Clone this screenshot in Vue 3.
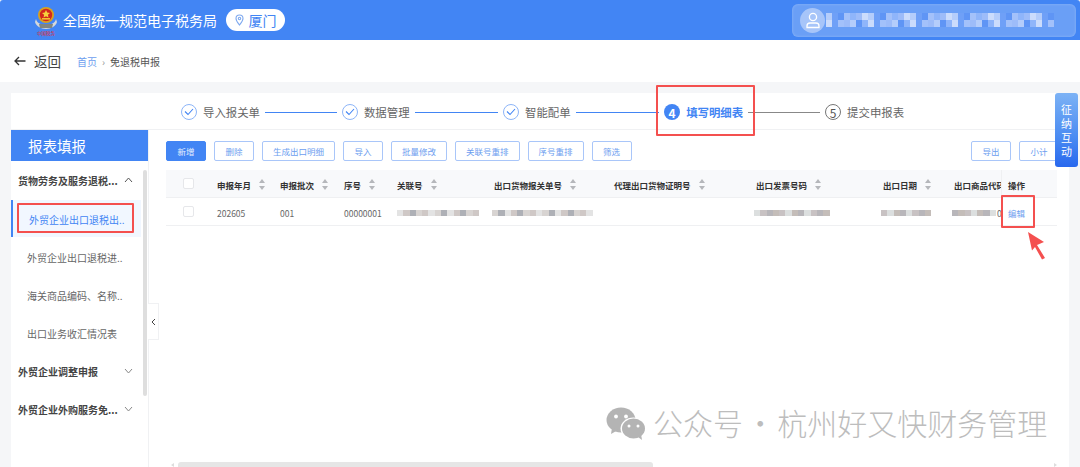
<template>
  <div class="page">
    <header class="topbar">
      <div class="brand">
        <div class="emblem">
          <svg width="24" height="25" viewBox="0 0 24 25">
            <path d="M2 13c1 4 5 6 10 6s9-2 10-6l1 3c-1 4-6 7-11 7S2 20 1 16z" fill="#d5d8da" />
            <path d="M5 18h14l-1 4H6z" fill="#7f8582" />
            <circle cx="12" cy="9" r="8" fill="#d8a21f" />
            <circle cx="12" cy="9" r="6.200" fill="#d3271d" />
            <path d="M12 4l1.200 2.600 2.800.3-2.100 1.900.6 2.800-2.500-1.400-2.500 1.400.6-2.800L8 6.900l2.800-.3z" fill="#f5d33c" />
            <rect x="8" y="12" width="8" height="1.600" fill="#f2c230" />
          </svg>
          <span class="emblem-text">中国税务</span>
        </div>
        <span class="brand-name">全国统一规范电子税务局</span>
        <span class="city">
          <svg width="9" height="12" viewBox="0 0 9 12" fill="none" stroke="#7fa9ef" stroke-width="1.100">
            <path d="M4.500 11C3 9 1 6.800 1 4.500a3.500 3.500 0 0 1 7 0C8 6.800 6 9 4.500 11z" />
            <circle cx="4.500" cy="4.500" r="1.200" />
          </svg>
          厦门
        </span>
      </div>
      <div class="user">
        <span class="avatar">
          <svg width="16" height="17" viewBox="0 0 16 17" fill="none" stroke="#fff" stroke-width="1.300">
            <circle cx="8" cy="5" r="3.600" />
            <path d="M2 15.500v-1.500c0-2 1.500-3 3-3h6c1.500 0 3 1 3 3v1.500z" />
          </svg>
        </span>
        <div class="user-mosaic">
          <div v-for="(row, r) in userRows" :key="r" class="mosaic-row">
            <i v-for="(c, i) in row" :key="i" :style="{ background: c }"></i>
          </div>
        </div>
      </div>
    </header>

    <div class="crumbbar">
      <svg class="back-icon" width="12" height="10" viewBox="0 0 12 10" fill="none" stroke="#333" stroke-width="1.300">
        <path d="M11.500 5H1M5 1L1 5l4 4" />
      </svg>
      <span class="back">返回</span>
      <span class="crumb-home">首页</span>
      <span class="crumb-sep">›</span>
      <span class="crumb-now">免退税申报</span>
    </div>

    <main class="card">
      <div class="steps">
        <template v-for="s in steps" :key="s.name">
          <span v-if="s.state === 'done'" class="step-icon done">
            <svg width="10" height="8" viewBox="0 0 10 8" fill="none" stroke="#4285f4" stroke-width="1.100">
              <path d="M1 3.500L4 6.500 9 1" />
            </svg>
          </span>
          <span v-else class="step-icon" :class="s.state">{{ s.num }}</span>
          <span class="step-name" :class="s.state">{{ s.name }}</span>
          <span v-if="s.line" class="step-line" :class="[s.line, s.state === 'done' ? 'blue' : 'grey']"></span>
        </template>
      </div>

      <div class="body">
        <aside class="side">
          <div class="side-title">报表填报</div>
          <div class="side-list">
            <div class="group first">
              <span>货物劳务及服务退税...</span>
              <svg width="9" height="6" viewBox="0 0 9 6" fill="none" stroke="#555" stroke-width="1"><path d="M1 5l3.500-4L8 5" /></svg>
            </div>
            <div class="item active">外贸企业出口退税出..</div>
            <div class="item">外贸企业出口退税进..</div>
            <div class="item">海关商品编码、名称..</div>
            <div class="item">出口业务收汇情况表</div>
            <div class="group">
              <span>外贸企业调整申报</span>
              <svg width="9" height="6" viewBox="0 0 9 6" fill="none" stroke="#888" stroke-width="1"><path d="M1 1l3.500 4L8 1" /></svg>
            </div>
            <div class="group">
              <span>外贸企业外购服务免...</span>
              <svg width="9" height="6" viewBox="0 0 9 6" fill="none" stroke="#888" stroke-width="1"><path d="M1 1l3.500 4L8 1" /></svg>
            </div>
          </div>
          <div class="side-scroll"></div>
          <div class="collapse">
            <svg width="5" height="8" viewBox="0 0 5 8" fill="none" stroke="#444" stroke-width="1"><path d="M4 1L1 4l3 3" /></svg>
          </div>
        </aside>

        <section class="content">
          <div class="toolbar">
            <button v-for="b in leftButtons" :key="b" class="btn" :class="{ primary: b === '新增' }">{{ b }}</button>
            <span class="spacer"></span>
            <button class="btn">导出</button>
            <button class="btn">小计</button>
          </div>

          <div class="table">
            <div class="tr th">
              <div class="cell"><span class="checkbox"></span></div>
              <div v-for="h in headers" :key="h" class="cell">
                <span class="th-text">{{ h }}</span>
                <span class="sort"><b class="up"></b><b class="down"></b></span>
              </div>
              <div class="cell clipped"><span class="th-text">出口商品代码</span></div>
              <div class="cell op">操作</div>
            </div>
            <div class="tr td">
              <div class="cell"><span class="checkbox"></span></div>
              <div class="cell">202605</div>
              <div class="cell">001</div>
              <div class="cell">00000001</div>
              <div v-for="(m, k) in rowMosaics" :key="k" class="cell">
                <div v-if="m.length" class="mosaic" :class="{ flush: k === 0 }">
                  <i v-for="(c, i) in m" :key="i" :style="{ background: c }"></i>
                </div>
                <span v-if="k === rowMosaics.length - 1" class="tail">0</span>
              </div>
              <div class="cell op"><a class="edit">编辑</a></div>
            </div>
          </div>

          <div class="hscroll">
            <span class="tri left"></span>
            <div class="hthumb"></div>
            <span class="tri right"></span>
          </div>
        </section>
      </div>

      <div class="fab">征<br />纳<br />互<br />动</div>
    </main>

    <!-- 截图上的红框和水印 -->
    <div class="mark mark-step"></div>
    <div class="mark mark-side"></div>
    <div class="mark mark-edit"></div>
    <svg class="arrow" width="20" height="30" viewBox="0 0 20 30">
      <path d="M1 1L17 11l-7 3 8 13-3 1.500L8 16l-3 3.500z" fill="#f4504f" />
    </svg>
    <div class="watermark">
      <svg width="40" height="34" viewBox="0 0 40 34">
        <ellipse cx="15" cy="13" rx="14.500" ry="12.500" fill="#b4b4b4" />
        <path d="M6 21l-1 6 7-4z" fill="#b4b4b4" />
        <circle cx="10" cy="9.500" r="1.900" fill="#fff" />
        <circle cx="20" cy="9.500" r="1.900" fill="#fff" />
        <ellipse cx="27.500" cy="21.500" rx="13" ry="11" fill="#fff" />
        <ellipse cx="27.500" cy="21.500" rx="11.500" ry="10" fill="#b4b4b4" />
        <path d="M32 30l4 3-1-6z" fill="#b4b4b4" />
        <circle cx="23" cy="19" r="1.500" fill="#fff" />
        <circle cx="32" cy="19" r="1.500" fill="#fff" />
      </svg>
      <span>公众号 · 杭州好又快财务管理</span>
    </div>
  </div>
</template>

<script setup>
const steps = [
  { name: '导入报关单', state: 'done', line: 'l1' },
  { name: '数据管理', state: 'done', line: 'l2' },
  { name: '智能配单', state: 'done', line: 'l2' },
  { name: '填写明细表', state: 'current', num: 4, line: 'l3' },
  { name: '提交申报表', state: 'todo', num: 5 },
];

const leftButtons = ['新增', '删除', '生成出口明细', '导入', '批量修改', '关联号重排', '序号重排', '筛选'];

const headers = ['申报年月', '申报批次', '序号', '关联号', '出口货物报关单号', '代理出口货物证明号', '出口发票号码', '出口日期'];

// 打码区域的色块
const g = ['#e3e3e3', '#c8c2c3', '#d8d4d2', '#b8b6ba', '#cfc8c6', '#dcdfdf', '#aeb0b6', '#c4bdb9'];
const pick = (n, s) => Array.from({ length: n }, (_, i) => g[(i * 3 + s + (i % 2)) % g.length]);

const rowMosaics = [
  pick(13, 0),
  pick(16, 2),
  [],
  pick(12, 5),
  pick(8, 1),
  pick(7, 3),
];

const b = ['#6fa0f7', '#8fb5fa', '#b4cdfb', '#a3c1fa', '#cbdcfc', '#5f95f5', '#9dbcf9'];
const userRows = [
  Array.from({ length: 38 }, (_, i) => b[(i * 5 + 2) % b.length]),
  Array.from({ length: 38 }, (_, i) => b[(i * 3 + 4) % b.length]),
];
</script>

<style>
html, body {
  margin: 0;
  background: #fff;
}
</style>

<style scoped>
.page {
  position: relative;
  width: 1080px;
  height: 467px;
  overflow: hidden;
  display: flex;
  flex-direction: column;
  background: #f5f6f8;
  font-family: "Noto Sans CJK SC", "Noto Sans", sans-serif;
  color: #555;
}

/* 顶栏 */
.topbar {
  height: 40px;
  flex: none;
  display: flex;
  align-items: center;
  justify-content: space-between;
  padding: 0 4px 0 34px;
  box-sizing: border-box;
  background: #4285f4;
  border-radius: 3px 3px 0 0;
}
.brand {
  display: flex;
  align-items: center;
}
.emblem {
  width: 24px;
  height: 32px;
  display: flex;
  flex-direction: column;
  align-items: center;
  margin-top: 4px;
}
.emblem-text {
  font-size: 4.500px;
  line-height: 5px;
  color: #e2231a;
  white-space: nowrap;
}
.brand-name {
  margin-left: 5px;
  color: #fff;
  font-size: 14px;
  white-space: nowrap;
}
.city {
  margin-left: 9px;
  width: 59px;
  height: 22px;
  border-radius: 11px;
  background: #fff;
  color: #4285f4;
  font-size: 14px;
  display: flex;
  align-items: center;
  justify-content: center;
  gap: 5px;
}
.user {
  width: 284px;
  height: 33px;
  display: flex;
  align-items: center;
  padding-left: 8px;
  box-sizing: border-box;
  border-radius: 6px;
  background: #6a9ff6;
  box-shadow: inset 0 0 3px rgba(255, 255, 255, 0.25);
}
.avatar {
  width: 25px;
  height: 25px;
  border-radius: 50%;
  background: #a7c5f9;
  display: flex;
  align-items: center;
  justify-content: center;
  flex: none;
}
.user-mosaic {
  margin-left: 1px;
  filter: blur(0.7px);
}
.mosaic-row {
  display: flex;
}
.mosaic-row i {
  width: 6px;
  height: 7px;
}

/* 面包屑 */
.crumbbar {
  height: 42px;
  flex: none;
  display: flex;
  align-items: center;
  background: #fff;
  padding-left: 14px;
  white-space: nowrap;
}
.back {
  margin-left: 8px;
  font-size: 13.500px;
  color: #444;
}
.crumb-home {
  margin-left: 16px;
  font-size: 10px;
  color: #6d9eef;
}
.crumb-sep {
  margin: 0 5px;
  font-size: 10px;
  color: #999;
}
.crumb-now {
  font-size: 10px;
  color: #555;
}

/* 主卡片 */
.card {
  position: relative;
  flex: 1;
  margin: 11px 11px 0;
  display: flex;
  flex-direction: column;
  min-height: 0;
  background: #fff;
}
.steps {
  height: 37px;
  flex: none;
  display: flex;
  align-items: center;
  padding: 2px 0 0 170px;
  box-sizing: border-box;
  border-bottom: 1px solid #f0f1f3;
  white-space: nowrap;
}
.step-icon {
  width: 16px;
  height: 16px;
  box-sizing: border-box;
  flex: none;
  border-radius: 50%;
  display: flex;
  align-items: center;
  justify-content: center;
  font-size: 12px;
}
.step-icon.done {
  border: 1px solid #8db5f8;
}
.step-icon.current {
  background: #4285f4;
  color: #fff;
  font-weight: 700;
}
.step-icon.todo {
  border: 1px solid #777;
  color: #555;
}
.step-name {
  margin-left: 6px;
  font-size: 11.400px;
  color: #666;
}
.step-name.current {
  color: #4285f4;
  font-weight: 700;
}
.step-line {
  height: 1px;
  margin: 0 5px;
  flex: none;
}
.step-line.blue { background: #4285f4; }
.step-line.grey { background: #888; }
.l1 { width: 72px; }
.l2 { width: 83.500px; }
.l3 { width: 72px; }

.body {
  flex: 1;
  display: flex;
  min-height: 0;
}

/* 左侧 */
.side {
  position: relative;
  width: 137px;
  flex: none;
  border-right: 1px solid #f0f1f3;
}
.side-title {
  height: 31px;
  padding-left: 17px;
  line-height: 31px;
  background: #4285f4;
  color: #fff;
  font-size: 14.500px;
}
.group {
  height: 38px;
  display: flex;
  align-items: center;
  justify-content: space-between;
  width: 122px;
  padding-left: 7px;
  box-sizing: border-box;
  font-size: 10px;
  font-weight: 700;
  color: #444;
  white-space: nowrap;
}
.group.first {
  height: 39px;
  padding-bottom: 1px;
}
.item {
  width: 130px;
  height: 38px;
  line-height: 36px;
  padding: 2px 0 0 16px;
  box-sizing: border-box;
  font-size: 10px;
  color: #666;
  white-space: nowrap;
}
.item.active {
  height: 37px;
  line-height: 36px;
  margin-bottom: 1px;
  background: #f1f7ff;
  border-left: 2px solid #4285f4;
  color: #4285f4;
}
.side-scroll {
  position: absolute;
  left: 132px;
  top: 40px;
  width: 4px;
  height: 226px;
  border-radius: 2px;
  background: #dedede;
}
.collapse {
  position: absolute;
  left: 137px;
  top: 173px;
  width: 11px;
  height: 37px;
  box-sizing: border-box;
  border: 1px solid #f0f1f3;
  border-left: 0;
  background: #fff;
  display: flex;
  align-items: center;
  justify-content: center;
}

/* 右侧表格 */
.content {
  position: relative;
  flex: 1;
  min-width: 0;
  padding: 11px 0 0 17px;
  box-sizing: border-box;
}
.toolbar {
  width: 893px;
  display: flex;
  gap: 8px;
}
.spacer {
  flex: 1;
}
.btn {
  height: 20px;
  min-width: 40px;
  padding: 0 10px;
  box-sizing: border-box;
  border: 1px solid #a9c6f9;
  border-radius: 2px;
  background: #fff;
  color: #6d9eef;
  font: 8.500px "Noto Sans CJK SC", sans-serif;
  white-space: nowrap;
}
.btn.primary {
  background: #4285f4;
  border-color: #4285f4;
  color: #e4eefe;
}
.table {
  width: 891px;
  margin-top: 9px;
}
.tr {
  display: grid;
  grid-template-columns: 51px 63px 64px 53px 97px 120px 142px 127px 71px 47px 56px;
  font-size: 8.500px;
  white-space: nowrap;
}
.th {
  height: 27px;
  background: #f8f9fb;
  border-bottom: 1px solid #eff0f2;
  color: #333;
  font-weight: 700;
}
.td {
  height: 27px;
  border-bottom: 1px solid #eff0f2;
  color: #666;
}
.cell {
  display: flex;
  align-items: center;
  min-width: 0;
  padding-top: 2px;
  box-sizing: border-box;
}
.cell:first-child {
  padding: 0 0 0 17px;
}
.clipped {
  overflow: hidden;
}
.th-text {
  flex: none;
}
.checkbox {
  width: 11px;
  height: 11px;
  box-sizing: border-box;
  border: 1px solid #e6e7ea;
  border-radius: 2px;
  background: #fff;
}
.sort {
  margin-left: 8px;
  display: flex;
  flex-direction: column;
  gap: 3px;
}
.up, .down {
  width: 0;
  height: 0;
  border-left: 3px solid transparent;
  border-right: 3px solid transparent;
}
.up { border-bottom: 4px solid #b5b7bb; }
.down { border-top: 4px solid #b5b7bb; }
.op {
  padding-left: 6px;
  border-left: 1px solid #eff0f2;
}
.td .op {
  border-left: 0;
  padding-left: 7px;
}
.edit {
  color: #6d9eef;
  font-size: 8.500px;
}
.mosaic {
  display: flex;
  margin-left: -2px;
  flex: none;
  filter: blur(0.4px);
}
.mosaic.flush {
  margin-left: 0;
}
.mosaic i {
  width: 6.300px;
  height: 6px;
  flex: none;
}
.tail {
  margin-left: 1px;
}
.hscroll {
  position: absolute;
  left: 22px;
  right: 12px;
  bottom: 0;
  height: 5px;
  display: flex;
  align-items: center;
}
.tri {
  width: 0;
  height: 0;
  border-top: 2.500px solid transparent;
  border-bottom: 2.500px solid transparent;
}
.tri.left {
  border-right: 3px solid #ddd;
  margin-right: 4px;
}
.tri.right {
  margin-left: auto;
  border-left: 3px solid #ddd;
}
.hthumb {
  width: 475px;
  height: 5px;
  border-radius: 3px 3px 0 0;
  background: #e6e6e6;
}
.fab {
  position: absolute;
  right: -9px;
  top: 0;
  width: 23px;
  height: 74px;
  box-sizing: border-box;
  padding-top: 9px;
  border-radius: 3px;
  background: linear-gradient(180deg, #7cb2f5 0%, #4a8bf2 60%, #2868ee 100%);
  color: #fff;
  font-size: 11px;
  line-height: 14px;
  text-align: center;
}

/* 标注 */
.mark {
  position: absolute;
  box-sizing: border-box;
  border: 2.500px solid #f4504f;
  border-radius: 1px;
}
.mark-step { left: 656px; top: 85px; width: 99px; height: 51px; }
.mark-side { left: 17px; top: 203px; width: 117px; height: 30px; }
.mark-edit { left: 1001px; top: 195px; width: 34px; height: 33px; }
.arrow {
  position: absolute;
  left: 1027px;
  top: 231px;
}
.watermark {
  position: absolute;
  left: 606px;
  top: 407px;
  display: flex;
  align-items: center;
  gap: 7px;
  color: #bdbdbd;
  font-size: 30px;
  font-weight: 300;
  line-height: 34px;
  word-spacing: -4.500px;
  white-space: nowrap;
}
.watermark span {
  margin-top: -4px;
}
</style>
